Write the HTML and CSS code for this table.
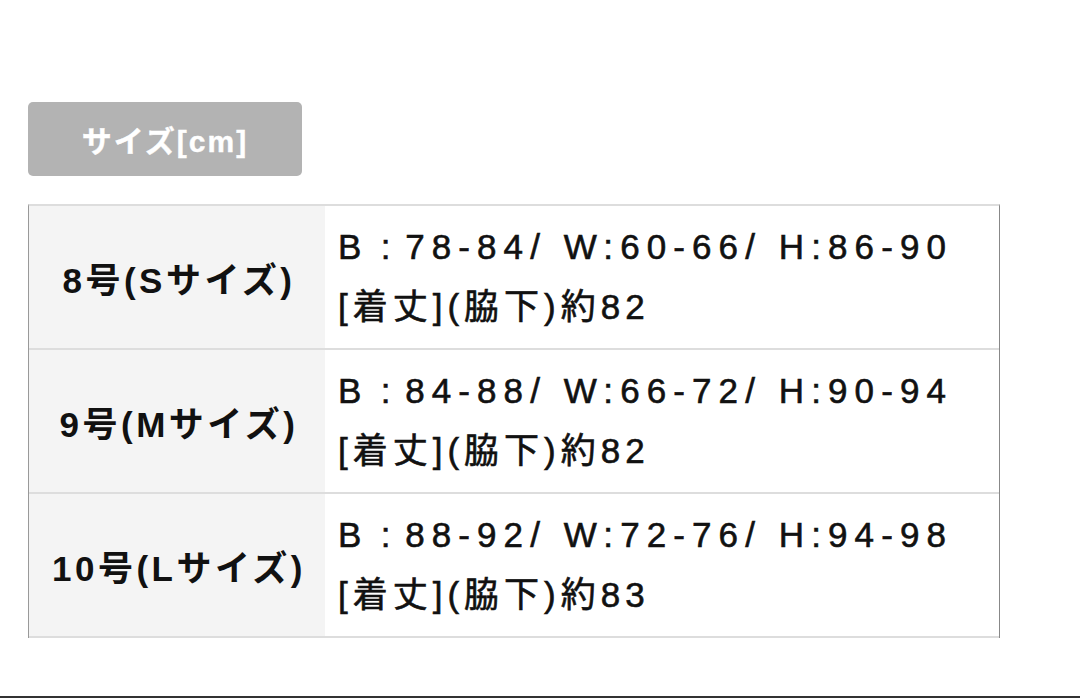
FILE: index.html
```html
<!DOCTYPE html>
<html lang="ja">
<head>
<meta charset="utf-8">
<link rel="stylesheet" href="styles.css">
</head>
<body>
<div class="page">
  <div class="tag">サイズ[cm]</div>
  <div class="table">
    <div class="row">
      <div class="label">8号(Sサイズ)</div>
      <div class="value"><div>B<span class="sep"> : </span>78-84/ W:60-66/ H:86-90</div><div class="sub">[着丈](脇下)約82</div></div>
    </div>
    <div class="row">
      <div class="label">9号(Mサイズ)</div>
      <div class="value"><div>B<span class="sep"> : </span>84-88/ W:66-72/ H:90-94</div><div class="sub">[着丈](脇下)約82</div></div>
    </div>
    <div class="row">
      <div class="label">10号(Lサイズ)</div>
      <div class="value"><div>B<span class="sep"> : </span>88-92/ W:72-76/ H:94-98</div><div class="sub">[着丈](脇下)約83</div></div>
    </div>
  </div>
</div>
<div class="footer-line"></div>
</body>
</html>
```
FILE: styles.css
```css
html, body {
  margin: 0;
  padding: 0;
  background: #fff;
}
body {
  font-family: "Liberation Sans", "Noto Sans CJK JP", sans-serif;
  color: #111;
  width: 1080px;
  height: 698px;
  overflow: hidden;
  position: relative;
}
.page {
  padding: 102px 0 0 28px;
  height: 594px;
}
.tag {
  width: 274px;
  height: 74px;
  background: #b3b3b3;
  border-radius: 5px;
  color: #fff;
  font-weight: 700;
  font-size: 30px;
  letter-spacing: 2px;
  display: flex;
  align-items: center;
  justify-content: center;
  -webkit-text-stroke: 0.4px #fff;
}
.table {
  margin-top: 28px;
  width: 970px;
  border-left: 1px solid #999;
  border-right: 1px solid #888;
  border-top: 2px solid #ddd;
}
.row {
  display: flex;
  height: 142px;
  border-bottom: 2px solid #ddd;
}
.label {
  width: 296px;
  background: #f4f4f4;
  display: flex;
  align-items: center;
  justify-content: center;
  font-size: 35px;
  font-weight: 700;
  letter-spacing: 3.5px;
  padding-left: 4px;
  box-sizing: border-box;
}
.value {
  flex: 1;
  display: flex;
  flex-direction: column;
  justify-content: center;
  padding-left: 13px;
  font-size: 35px;
  line-height: 60px;
  letter-spacing: 7.1px;
  font-weight: 400;
  -webkit-text-stroke: 0.6px #111;
}
.value .sep {
  letter-spacing: 2.5px;
}
.value .sub {
  letter-spacing: 5px;
}
.footer-line {
  position: absolute;
  left: 0;
  right: 0;
  top: 696px;
  height: 2px;
  background: #333;
}
```
